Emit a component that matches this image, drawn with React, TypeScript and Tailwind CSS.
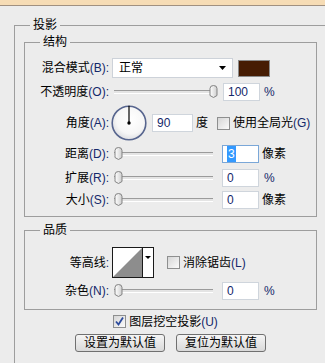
import React from "react";

// 投影 (Drop Shadow) settings panel

const KEY = "text-[#14286a]";

function Label({ text, k }: { text: string; k?: string }) {
  return (
    <span className="w-[84px] shrink-0 text-right whitespace-nowrap">
      {text}
      {k && <span className={KEY}>({k})</span>}
      <span className={KEY}>:</span>
    </span>
  );
}

function Thumb() {
  return (
    <svg width="9" height="13" viewBox="0 0 9 13">
      <defs>
        <linearGradient id="thg" x1="0" y1="0" x2="1" y2="0">
          <stop offset="0" stopColor="#ffffff" />
          <stop offset="1" stopColor="#cfcfcf" />
        </linearGradient>
      </defs>
      <path
        d="M1 3.5 Q1 0.5 4.5 0.5 Q8 0.5 8 3.5 V10.5 L4.5 12.5 L1 10.5 Z"
        fill="url(#thg)"
        stroke="#828282"
        strokeWidth="1"
      />
    </svg>
  );
}

function Slider({ pos }: { pos: number }) {
  return (
    <div className="relative ml-[3px] w-[106px] h-[18px] flex items-center">
      <div className="ml-[2px] w-[99px] h-[4px] border-t border-[#9b9b9b] border-b border-b-[#ffffff] bg-[#e4e4e4]" />
      <div className="absolute top-[2px]" style={{ left: pos }}>
        <Thumb />
      </div>
    </div>
  );
}

function Field({ children, focused, w = 37 }: { children: React.ReactNode; focused?: boolean; w?: number }) {
  return (
    <div
      className={
        "h-[18px] bg-white border flex items-center pl-[4px] " +
        (focused ? "border-[#7aa7d8]" : "border-[#cfd5dc]")
      }
      style={{ width: w }}
    >
      {children}
    </div>
  );
}

function Check({ checked }: { checked?: boolean }) {
  return (
    <div className="w-[13px] h-[13px] shrink-0 border border-[#8e8f8f] bg-linear-to-br from-[#d6d6d6] to-[#fbfbfb] flex items-center justify-center">
      {checked && (
        <svg width="11" height="11" viewBox="0 0 11 11">
          <path d="M2 5.5 L4.5 8.5 L9 1.5" fill="none" stroke="#2b4a9c" strokeWidth="1.8" />
        </svg>
      )}
    </div>
  );
}

function Dial() {
  return (
    <svg width="36" height="36" viewBox="0 0 36 36" className="ml-[2px] shrink-0">
      <defs>
        <radialGradient id="dg" cx="0.55" cy="0.4" r="0.6">
          <stop offset="0" stopColor="#ffffff" />
          <stop offset="0.7" stopColor="#f6f6f6" />
          <stop offset="1" stopColor="#dedfe3" />
        </radialGradient>
      </defs>
      <circle cx="18" cy="18" r="16.8" fill="url(#dg)" stroke="#57658e" strokeWidth="1.6" />
      <line x1="18" y1="18" x2="18" y2="0.8" stroke="#000" strokeWidth="1.2" />
      <circle cx="18" cy="18" r="1.7" fill="#000" />
    </svg>
  );
}

function Contour() {
  return (
    <svg width="42" height="31" viewBox="0 0 42 31" className="ml-[3px] shrink-0">
      <rect x="0.5" y="0.5" width="41" height="30" fill="#fff" stroke="#1a1a1a" />
      <polygon points="1,30 30,1 30,30" fill="#8d8d8d" />
      <line x1="30.5" y1="1" x2="30.5" y2="30" stroke="#1a1a1a" />
      <polygon points="33,9 39,9 36,12" fill="#000" />
    </svg>
  );
}

export default function App() {
  return (
    <div className="w-[325px] h-[363px] overflow-hidden bg-[#ececec] text-[12px] leading-[16px] text-black font-['Liberation_Sans','Noto_Sans_CJK_SC',sans-serif]">
      <div className="h-[5px] bg-[#f6dcb5]" />
      <div className="h-[1px] bg-[#a09080]" />

      <fieldset className="ml-[14px] mt-[11px] w-[340px] h-[420px] border border-[#9d9d9d] px-[9px]">
        <legend className="ml-[6px] px-[3px] leading-[16px]">投影</legend>

        {/* 结构 */}
        <fieldset className="mt-[1px] w-[293px] border border-[#9d9d9d]">
          <legend className="ml-[15px] px-[3px] leading-[16px]">结构</legend>
          <div className="flex flex-col pt-[8px] pb-[7px]">
            <div className="flex items-center h-[20px]">
              <Label text="混合模式" k="B" />
              <div className="ml-[3px] w-[121px] h-[20px] bg-white border border-[#cdd2d9] flex items-center justify-between pl-[6px] pr-[6px]">
                <span>正常</span>
                <svg width="7" height="4" viewBox="0 0 7 4">
                  <polygon points="0,0 7,0 3.5,4" fill="#000" />
                </svg>
              </div>
              <div className="ml-[5px] w-[32px] h-[17px] border border-[#8a8a8a] bg-[#461c03]" />
            </div>

            <div className="flex items-center h-[18px] mt-[5px]">
              <Label text="不透明度" k="O" />
              <Slider pos={97} />
              <div className="ml-[5px]">
                <Field>
                  <span className={KEY}>100</span>
                </Field>
              </div>
              <span className={"ml-[4px] " + KEY}>%</span>
            </div>

            <div className="flex items-center h-[36px] mt-[4px]">
              <Label text="角度" k="A" />
              <Dial />
              <div className="ml-[5px]">
                <Field w={41}>
                  <span className={KEY}>90</span>
                </Field>
              </div>
              <span className="ml-[3px]">度</span>
              <div className="ml-[9px]">
                <Check />
              </div>
              <span className="ml-[3px] whitespace-nowrap">
                使用全局光<span className={KEY}>(G)</span>
              </span>
            </div>

            <div className="flex items-center h-[18px] mt-[4px]">
              <Label text="距离" k="D" />
              <Slider pos={2} />
              <div className="ml-[4px]">
                <Field focused>
                  <span className="bg-[#3399ff] text-white px-[1px]">3</span>
                </Field>
              </div>
              <span className="ml-[3px]">像素</span>
            </div>

            <div className="flex items-center h-[18px] mt-[6px]">
              <Label text="扩展" k="R" />
              <Slider pos={2} />
              <div className="ml-[4px]">
                <Field>
                  <span className={KEY}>0</span>
                </Field>
              </div>
              <span className={"ml-[5px] " + KEY}>%</span>
            </div>

            <div className="flex items-center h-[18px] mt-[4px]">
              <Label text="大小" k="S" />
              <Slider pos={2} />
              <div className="ml-[4px]">
                <Field>
                  <span className={KEY}>0</span>
                </Field>
              </div>
              <span className="ml-[3px]">像素</span>
            </div>
          </div>
        </fieldset>

        {/* 品质 */}
        <fieldset className="mt-[5px] w-[293px] border border-[#9d9d9d]">
          <legend className="ml-[15px] px-[3px] leading-[16px]">品质</legend>
          <div className="flex flex-col pt-[9px] pb-[9px]">
            <div className="flex items-center h-[31px]">
              <Label text="等高线" />
              <Contour />
              <div className="ml-[13px]">
                <Check />
              </div>
              <span className="ml-[3px] whitespace-nowrap">
                消除锯齿<span className={KEY}>(L)</span>
              </span>
            </div>
            <div className="flex items-center h-[18px] mt-[4px]">
              <Label text="杂色" k="N" />
              <Slider pos={2} />
              <div className="ml-[4px]">
                <Field>
                  <span className={KEY}>0</span>
                </Field>
              </div>
              <span className={"ml-[5px] " + KEY}>%</span>
            </div>
          </div>
        </fieldset>

        <div className="w-[293px] flex flex-col items-center">
          <div className="flex items-center h-[13px] mt-[5px] -translate-x-[5px]">
            <Check checked />
            <span className="ml-[3px] whitespace-nowrap">
              图层挖空投影<span className={KEY}>(U)</span>
            </span>
          </div>
          <div className="flex gap-[11px] mt-[6px]">
            <button className="w-[90px] h-[18px] rounded-[3px] border border-[#707070] bg-linear-to-b from-[#f5f5f5] to-[#d9d9d9] text-[12px] leading-[16px]">
              设置为默认值
            </button>
            <button className="w-[90px] h-[18px] rounded-[3px] border border-[#707070] bg-linear-to-b from-[#f5f5f5] to-[#d9d9d9] text-[12px] leading-[16px]">
              复位为默认值
            </button>
          </div>
        </div>
      </fieldset>
    </div>
  );
}
